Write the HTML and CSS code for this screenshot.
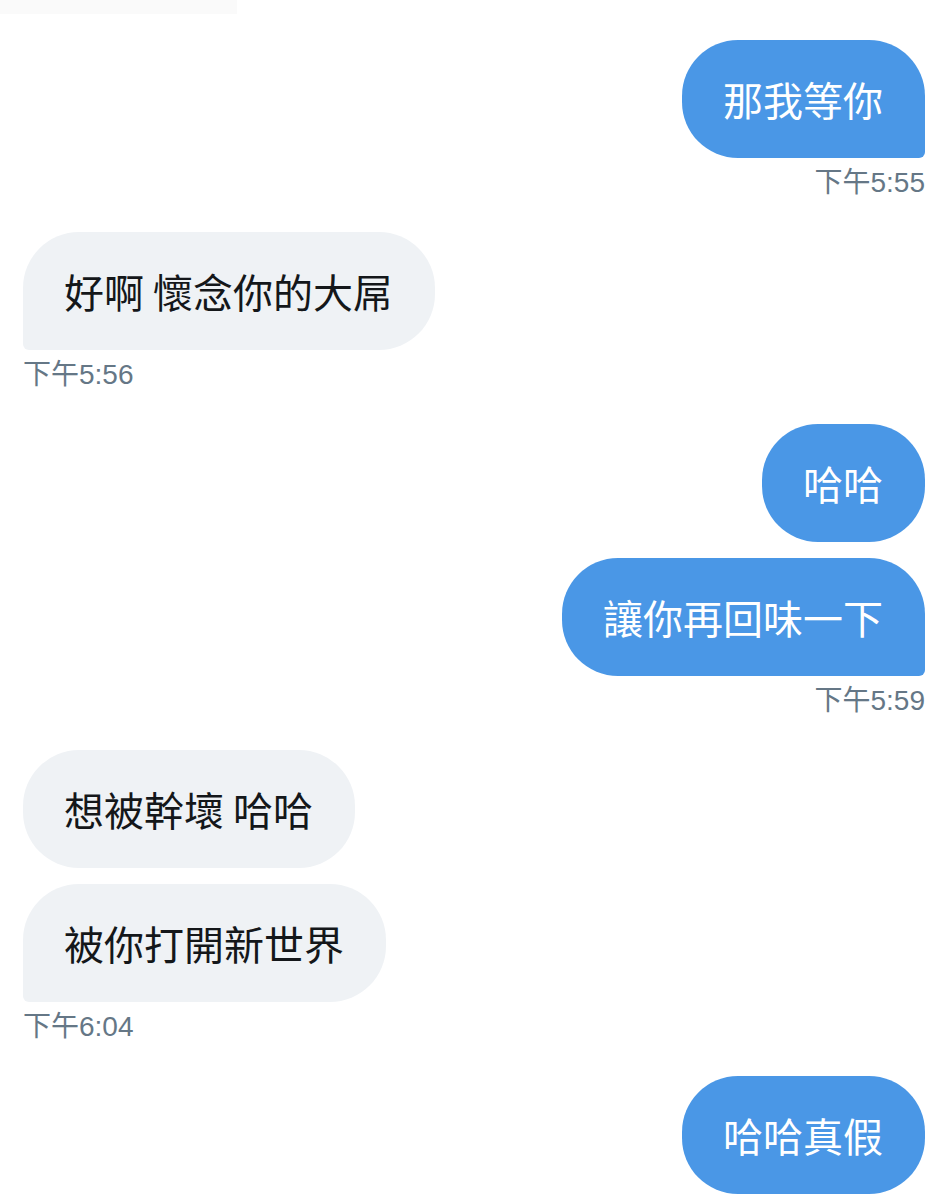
FILE: index.html
```html
<!DOCTYPE html>
<html lang="zh-Hant">

<head>
    <meta charset="UTF-8">
    <meta name="viewport" content="width=device-width, initial-scale=1.0">
    <title>Messages</title>
    <link rel="stylesheet" href="styles.css">
</head>

<body>
    <div class="statusbar"></div>

    <div class="chat">
        <div class="group group--sent">
            <div class="bubble bubble--last">那我等你</div>
            <div class="time">下午5:55</div>
        </div>

        <div class="group group--received">
            <div class="bubble bubble--last">好啊 懷念你的大屌</div>
            <div class="time">下午5:56</div>
        </div>

        <div class="group group--sent">
            <div class="bubble">哈哈</div>
            <div class="bubble bubble--last">讓你再回味一下</div>
            <div class="time">下午5:59</div>
        </div>

        <div class="group group--received">
            <div class="bubble">想被幹壞 哈哈</div>
            <div class="bubble bubble--last">被你打開新世界</div>
            <div class="time">下午6:04</div>
        </div>

        <div class="group group--sent">
            <div class="bubble">哈哈真假</div>
        </div>
    </div>
</body>

</html>
```

FILE: styles.css
```css
html {
    box-sizing: border-box;
}

*,
*:before,
*:after {
    box-sizing: inherit;
}

body {
    margin: 0;
    background: #fff;
    font-family: "Liberation Sans", "Noto Sans CJK TC", sans-serif;
}

.statusbar {
    width: 237px;
    height: 14px;
    background: #fafafa;
}

.chat {
    display: flex;
    flex-direction: column;
    gap: 33px;
    padding: 26px 23px 0;
}

.group {
    display: flex;
    flex-direction: column;
    gap: 16px;
}

.group--sent {
    align-items: flex-end;
}

.group--received {
    align-items: flex-start;
}

.bubble {
    font-family: "Noto Sans CJK TC", sans-serif;
    font-size: 40px;
    line-height: 48px;
    padding: 35px 42px 35px 41px;
    border-radius: 56px;
    white-space: nowrap;
}

.group--sent .bubble {
    background: #4a97e6;
    color: #fff;
}

.group--received .bubble {
    background: #eff2f5;
    color: #14171a;
}

.group--sent .bubble--last {
    border-bottom-right-radius: 6px;
}

.group--received .bubble--last {
    border-bottom-left-radius: 6px;
}

.time {
    margin-top: -7px;
    font-size: 28px;
    line-height: 32px;
    color: #657786;
}
```
